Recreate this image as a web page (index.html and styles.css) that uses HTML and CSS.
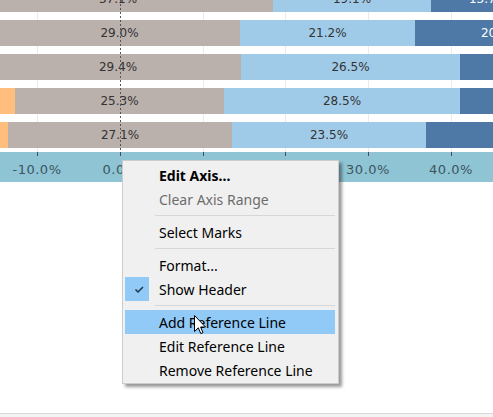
FILE: index.html
```html
<!DOCTYPE html>
<html>
<head>
<meta charset="utf-8">
<link rel="stylesheet" href="styles.css">
</head>
<body>
<div class="page">
  <div class="chart">
    <div class="gridline g1"></div>
    <div class="gridline g3"></div>
    <div class="gridline g4"></div>
    <div class="gridline g5"></div>
    <div class="gridline g6"></div>
    <div class="rows">
      <div class="row"><div class="track">
        <div class="seg orange" style="width:3px"></div>
        <div class="seg gray" style="width:310px">37.1%</div>
        <div class="seg lblue" style="width:158px">19.1%</div>
        <div class="seg dblue" style="width:114px">13.7%</div>
      </div></div>
      <div class="row"><div class="track">
        <div class="seg orange" style="width:39px"></div>
        <div class="seg gray" style="width:241px">29.0%</div>
        <div class="seg lblue" style="width:175px">21.2%</div>
        <div class="seg dblue" style="width:170px">20.4%</div>
      </div></div>
      <div class="row"><div class="track">
        <div class="seg orange" style="width:35px"></div>
        <div class="seg gray" style="width:246px">29.4%</div>
        <div class="seg lblue" style="width:219px">26.5%</div>
        <div class="seg dblue" style="width:150px"></div>
      </div></div>
      <div class="row"><div class="track">
        <div class="seg orange" style="width:55px"></div>
        <div class="seg gray" style="width:209px">25.3%</div>
        <div class="seg lblue" style="width:236px">28.5%</div>
        <div class="seg dblue" style="width:150px"></div>
      </div></div>
      <div class="row"><div class="track">
        <div class="seg orange" style="width:48px"></div>
        <div class="seg gray" style="width:224px">27.1%</div>
        <div class="seg lblue" style="width:194px">23.5%</div>
        <div class="seg dblue" style="width:150px"></div>
      </div></div>
    </div>
    <div class="refline"></div>
  </div>
  <div class="axis">
    <div class="tick t1"></div>
    <div class="tick t2"></div>
    <div class="tick t3"></div>
    <div class="tick t4"></div>
    <div class="tick t5"></div>
    <div class="tick t6"></div>
    <div class="alabel t1">-10.0%</div>
    <div class="alabel t2">0.0%</div>
    <div class="alabel t5">30.0%</div>
    <div class="alabel t6">40.0%</div>
  </div>
  <div class="spacer"></div>
  <div class="footer"></div>

  <div class="menu">
    <div class="item bold">Edit Axis...</div>
    <div class="item disabled">Clear Axis Range</div>
    <div class="sep"></div>
    <div class="item">Select Marks</div>
    <div class="sep"></div>
    <div class="item">Format...</div>
    <div class="item checked">
      <span class="check"><svg width="24" height="24" viewBox="0 0 24 24"><polyline points="10.5,12.5 13,15 18,10" fill="none" stroke="#1f3347" stroke-width="1.5"/></svg></span>
      Show Header
    </div>
    <div class="sep"></div>
    <div class="item active">Add Reference Line</div>
    <div class="item">Edit Reference Line</div>
    <div class="item">Remove Reference Line</div>
  </div>

  <svg class="cursor" width="13" height="20" viewBox="0 0 13 20">
    <path d="M0.5,0.5 L0.5,16.5 L4.3,12.8 L6.8,18.6 L9,17.6 L6.6,12 L11.5,12 Z" fill="#fff" stroke="#000" stroke-width="1" stroke-linejoin="miter"/>
  </svg>
</div>
</body>
</html>
```

FILE: styles.css
```css
html, body {
  margin: 0;
  padding: 0;
  background: #fff;
}
.page {
  position: relative;
  width: 493px;
  height: 417px;
  overflow: hidden;
  display: flex;
  flex-direction: column;
  font-family: "DejaVu Sans", sans-serif;
}
.chart {
  position: relative;
  height: 152px;
  overflow: hidden;
  flex: none;
}
.gridline {
  position: absolute;
  top: 0;
  bottom: 0;
  width: 1px;
  background: #ebebeb;
}
.g1 { left: 37px; }
.g3 { left: 203px; }
.g4 { left: 285px; }
.g5 { left: 368px; }
.g6 { left: 451px; }
.rows {
  position: relative;
  margin-top: -14px;
  display: flex;
  flex-direction: column;
  gap: 8px;
}
.row {
  height: 26px;
}
.track {
  display: flex;
  height: 26px;
  margin-left: -40px;
  width: max-content;
}
.seg {
  flex: none;
  height: 26px;
  display: flex;
  align-items: center;
  justify-content: center;
  font-size: 12px;
  color: #333;
  white-space: nowrap;
}
.orange { background: #ffbe7d; }
.gray { background: #bab0ac; }
.lblue { background: #a0cbe8; }
.dblue { background: #4e79a7; color: #fff; }
.refline {
  position: absolute;
  left: 120px;
  top: 0;
  bottom: 0;
  width: 1px;
  background: repeating-linear-gradient(to bottom, #555 0 2px, transparent 2px 4px);
}
.axis {
  position: relative;
  height: 30px;
  background: #8fc4d4;
  flex: none;
}
.tick {
  position: absolute;
  top: 0;
  width: 1px;
  height: 4px;
  background: #3f4f57;
}
.alabel {
  position: absolute;
  top: 9px;
  transform: translateX(-50%);
  font-size: 13px;
  letter-spacing: 0.5px;
  line-height: 18px;
  color: #3d5560;
  white-space: nowrap;
}
.t1 { left: 37px; }
.t2 { left: 120px; }
.t3 { left: 203px; }
.t4 { left: 285px; }
.t5 { left: 368px; }
.t6 { left: 451px; }
.spacer {
  flex: 1;
}
.footer {
  flex: none;
  height: 3px;
  border-top: 1px solid #dadada;
  background: #f3f3f3;
}
.menu {
  position: absolute;
  left: 122px;
  top: 160px;
  width: 217px;
  box-sizing: border-box;
  background: #f0f0f0;
  border: 1px solid #cccccc;
  padding: 2px 0 1px;
  box-shadow: 3px 3px 3px rgba(0, 0, 0, 0.4);
  font-family: "Noto Sans", sans-serif;
  font-size: 14px;
  color: #000;
}
.item {
  position: relative;
  height: 24px;
  box-sizing: border-box;
  padding-top: 2px;
  line-height: 22px;
  margin: 0 3px 0 2px;
  padding-left: 34px;
  white-space: nowrap;
}
.bold { font-weight: bold; }
.disabled { color: #6d6d6d; }
.active { background: #91c9f7; }
.check {
  position: absolute;
  left: 0;
  top: 0;
  width: 24px;
  height: 24px;
  background: #91c9f7;
}
.check svg { display: block; }
.sep {
  height: 9px;
  margin: 0 3px 0 32px;
  background: linear-gradient(#d7d7d7, #d7d7d7) 0 4px / 100% 1px no-repeat;
}
.cursor {
  position: absolute;
  left: 194px;
  top: 315px;
}
```
